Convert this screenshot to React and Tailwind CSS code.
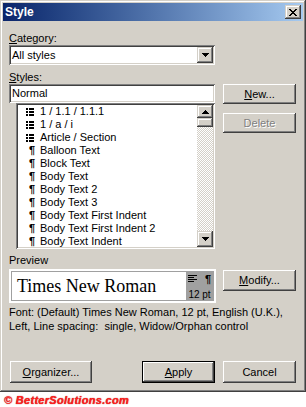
import React from "react";

const raised =
  "shadow-[inset_-1px_-1px_0_#404040,inset_1px_1px_0_#ffffff,inset_-2px_-2px_0_#808080,inset_2px_2px_0_#d4d0c8]";
const raisedScroll =
  "shadow-[inset_-1px_-1px_0_#404040,inset_1px_1px_0_#d4d0c8,inset_-2px_-2px_0_#808080,inset_2px_2px_0_#ffffff]";
const sunken =
  "shadow-[inset_1px_1px_0_#808080,inset_-1px_-1px_0_#ffffff,inset_2px_2px_0_#404040,inset_-2px_-2px_0_#d4d0c8]";

const styles = [
  { icon: "list", name: "1 / 1.1 / 1.1.1" },
  { icon: "list", name: "1 / a / i" },
  { icon: "list", name: "Article / Section" },
  { icon: "para", name: "Balloon Text" },
  { icon: "para", name: "Block Text" },
  { icon: "para", name: "Body Text" },
  { icon: "para", name: "Body Text 2" },
  { icon: "para", name: "Body Text 3" },
  { icon: "para", name: "Body Text First Indent" },
  { icon: "para", name: "Body Text First Indent 2" },
  { icon: "para", name: "Body Text Indent" },
];

function ArrowDown() {
  return (
    <svg width="7" height="4" viewBox="0 0 7 4" shapeRendering="crispEdges">
      <path d="M0 0h7v1H0zM1 1h5v1H1zM2 2h3v1H2zM3 3h1v1H3z" fill="#000" />
    </svg>
  );
}

function ArrowUp() {
  return (
    <svg width="7" height="4" viewBox="0 0 7 4" shapeRendering="crispEdges">
      <path d="M3 0h1v1H3zM2 1h3v1H2zM1 2h5v1H1zM0 3h7v1H0z" fill="#000" />
    </svg>
  );
}

function CloseGlyph() {
  return (
    <svg width="8" height="7" viewBox="0 0 8 7" shapeRendering="crispEdges">
      <path
        d="M0 0h2v1H0zM6 0h2v1H6zM1 1h2v1H1zM5 1h2v1H5zM2 2h4v1H2zM3 3h2v1H3zM2 4h4v1H2zM1 5h2v1H1zM5 5h2v1H5zM0 6h2v1H0zM6 6h2v1H6z"
        fill="#000"
      />
    </svg>
  );
}

function ListIcon() {
  return (
    <svg width="8" height="8" viewBox="0 0 8 8" shapeRendering="crispEdges">
      <path d="M0 0h2v2H0zM3 0h5v2H3zM0 3h2v2H0zM3 3h5v2H3zM0 6h2v2H0zM3 6h5v2H3z" fill="#000" />
    </svg>
  );
}

function Button({ children, className = "", disabled = false, isDefault = false }) {
  if (isDefault) {
    return (
      <div className={`border border-black ${className}`}>
        <div className={`w-full h-full flex items-center justify-center ${raised}`}>{children}</div>
      </div>
    );
  }
  return (
    <div
      className={`flex items-center justify-center ${raised} ${
        disabled ? "text-[#808080] [text-shadow:1px_1px_0_#ffffff]" : ""
      } ${className}`}
    >
      {children}
    </div>
  );
}

export default function App() {
  return (
    <div className="w-[306px] h-[407px] bg-white text-[11px] leading-[13px] text-black font-['Liberation_Sans',Arial,sans-serif] select-none">
      {/* Window */}
      <div
        className={`w-[306px] h-[392px] bg-[#d4d0c8] p-[3px] shadow-[inset_-1px_-1px_0_#404040,inset_1px_1px_0_#d4d0c8,inset_-2px_-2px_0_#808080,inset_2px_2px_0_#ffffff]`}
      >
        {/* Title bar */}
        <div className="h-[18px] bg-linear-to-r from-[#0a246a] to-[#a6caf0] flex items-center justify-between pl-[2px] pr-[2px]">
          <span className="text-white font-bold text-[12px] leading-[18px]">Style</span>
          <div className={`w-[16px] h-[14px] bg-[#d4d0c8] flex items-center justify-center ${raisedScroll}`}>
            <CloseGlyph />
          </div>
        </div>

        {/* Body */}
        <div className="px-[6px]">
          <div className="mt-[11px] h-[13px]">
            <u>C</u>ategory:
          </div>
          <div className={`w-[206px] h-[20px] bg-white p-[2px] flex ${sunken}`}>
            <div className="flex-1 pl-[1px] leading-[16px]">All styles</div>
            <div className={`w-[16px] h-[16px] bg-[#d4d0c8] flex items-center justify-center ${raisedScroll}`}>
              <ArrowDown />
            </div>
          </div>

          <div className="mt-[6px] h-[13px]">
            <u>S</u>tyles:
          </div>
          <div className="flex gap-[8px]">
            <div className="w-[206px]">
              <div className={`h-[19px] bg-white px-[3px] leading-[19px] ${sunken}`}>Normal</div>
              <div className={`ml-[7px] w-[199px] h-[146px] bg-white p-[2px] flex ${sunken}`}>
                <div className="flex-1 flex flex-col">
                  {styles.map((s) => (
                    <div key={s.name} className="h-[13px] flex items-center whitespace-pre">
                      <span className="w-[22px] shrink-0 flex items-center">
                        {s.icon === "list" ? (
                          <span className="ml-[8px] flex">
                            <ListIcon />
                          </span>
                        ) : (
                          <span className="ml-[11px] font-bold">¶</span>
                        )}
                      </span>
                      <span>{s.name}</span>
                    </div>
                  ))}
                </div>
                <div className="w-[16px] flex flex-col">
                  <div className={`h-[13px] bg-[#d4d0c8] flex items-center justify-center ${raisedScroll}`}>
                    <ArrowUp />
                  </div>
                  <div className={`h-[9px] bg-[#d4d0c8] ${raisedScroll}`} />
                  <div className="flex-1 bg-[repeating-conic-gradient(#d4d0c8_0_25%,#ffffff_0_50%)] bg-[length:2px_2px]" />
                  <div className={`h-[16px] bg-[#d4d0c8] flex items-center justify-center ${raisedScroll}`}>
                    <ArrowDown />
                  </div>
                </div>
              </div>
            </div>
            <div className="w-[73px] flex flex-col">
              <Button className="h-[20px]">
                <span>
                  <u>N</u>ew...
                </span>
              </Button>
              <Button className="h-[20px] mt-[9px]" disabled>
                Delete
              </Button>
            </div>
          </div>

          <div className="mt-[5px] h-[13px]">Preview</div>
          <div className="mt-[2px] flex gap-[7px]">
            <div className="w-[207px] h-[34px] bg-white p-[2px]">
              <div className="h-full border border-[#a0a0a0] flex">
                <div className="flex-1 flex items-center pl-[5px] font-['Liberation_Serif','Times_New_Roman',serif] text-[18px]">
                  Times New Roman
                </div>
                <div className="w-[27px] bg-[#a0a0a0] flex flex-col pt-[2px]">
                  <div className="flex items-start justify-between pl-[2px] pr-[2px] h-[11px]">
                    <svg width="9" height="8" viewBox="0 0 9 8" className="mt-[1px]" shapeRendering="crispEdges">
                      <path d="M0 0h9v1H0zM0 2h6v1H0zM0 4h9v1H0zM0 6h6v1H0z" fill="#000" />
                    </svg>
                    <span className="font-bold leading-[11px]">¶</span>
                  </div>
                  <div className="text-[10px] leading-[12px] mt-[4px] text-center">12 pt</div>
                </div>
              </div>
            </div>
            <Button className="w-[73px] h-[21px] mt-[1px]">
              <span>
                <u>M</u>odify...
              </span>
            </Button>
          </div>

          <div className="mt-[2px] leading-[14px] whitespace-pre">
            {"Font: (Default) Times New Roman, 12 pt, English (U.K.),\nLeft, Line spacing:  single, Widow/Orphan control"}
          </div>

          <div className="mt-[28px] flex">
            <Button className="ml-[1px] w-[82px] h-[22px]">
              <span>
                <u>O</u>rganizer...
              </span>
            </Button>
            <Button isDefault className="ml-[50px] w-[73px] h-[22px]">
              <span>
                <u>A</u>pply
              </span>
            </Button>
            <Button className="ml-[8px] w-[73px] h-[22px]">Cancel</Button>
          </div>
        </div>
      </div>

      {/* Watermark */}
      <div className="pl-[4px] pt-[2px] text-[11px] leading-[13px] italic font-bold text-[#ff2020] tracking-[0.3px] [text-shadow:0_0_1px_#a00000]">
        © BetterSolutions.com
      </div>
    </div>
  );
}
